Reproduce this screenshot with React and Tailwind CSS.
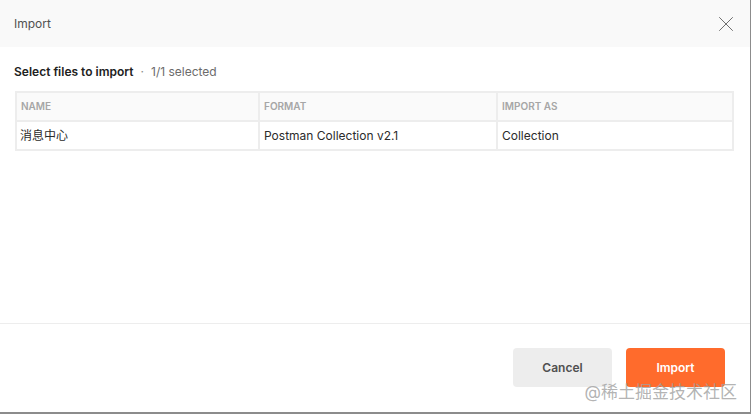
import { X } from 'lucide-react';

const columns = ['Name', 'Format', 'Import as'];

const rows = [
  { name: '消息中心', format: 'Postman Collection v2.1', importAs: 'Collection' }
];

export default function App() {
  return (
    <div
      className="relative w-[751px] h-[414px] bg-white flex flex-col border-r border-b-2 border-[#8c8c8c] overflow-hidden"
      style={{ fontFamily: 'Inter, "Noto Sans CJK SC", sans-serif' }}
    >
      <div className="h-[47px] shrink-0 bg-[#f9f9f9] flex items-center justify-between pl-[14px] pr-[11px]">
        <span className="text-[12px] text-[#505050]">Import</span>
        <X className="w-[26px] h-[26px] text-[#6b6b6b]" strokeWidth={0.9} />
      </div>

      <div className="flex-1 px-[14px]">
        <div className="mt-[16px] flex items-center text-[12px]">
          <span className="font-semibold text-[#212121]">Select files to import</span>
          <span className="mx-[7px] text-[#8a8a8a]">·</span>
          <span className="text-[#6b6b6b]">1/1 selected</span>
        </div>

        <table className="mt-[10px] ml-px w-[719px] border-collapse text-left">
          <thead>
            <tr className="bg-[#fafafa]">
              {columns.map((c, i) => (
                <th
                  key={c}
                  className={
                    'h-[29px] border-2 border-[#ededed] px-[4px] text-[10px] font-semibold uppercase text-[#a6a6a6] ' +
                    (i === 0 ? 'w-[243px]' : i === 1 ? 'w-[238px]' : '')
                  }
                >
                  {c}
                </th>
              ))}
            </tr>
          </thead>
          <tbody>
            {rows.map((r) => (
              <tr key={r.name}>
                <td className="h-[29px] border-2 border-[#ededed] px-[3px] text-[12px] text-[#2b2b2b]">{r.name}</td>
                <td className="h-[29px] border-2 border-[#ededed] px-[4px] text-[12px] text-[#2b2b2b]">{r.format}</td>
                <td className="h-[29px] border-2 border-[#ededed] px-[4px] text-[12px] text-[#2b2b2b]">{r.importAs}</td>
              </tr>
            ))}
          </tbody>
        </table>
      </div>

      <div className="h-[89px] shrink-0 border-t border-[#ededed] flex items-start justify-end gap-[14px] pt-[24px] pr-[25px]">
        <button className="w-[99px] h-[39px] rounded-[4px] bg-[#ededed] text-[12px] font-semibold text-[#505050]">
          Cancel
        </button>
        <button className="w-[99px] h-[39px] rounded-[4px] bg-[#ff6b2c] text-[12px] font-semibold text-white">
          Import
        </button>
      </div>

      <div className="absolute right-[13px] bottom-[11px] text-[17px] leading-none text-[#a0a0a0]/80 pointer-events-none">
        @稀土掘金技术社区
      </div>
    </div>
  );
}
